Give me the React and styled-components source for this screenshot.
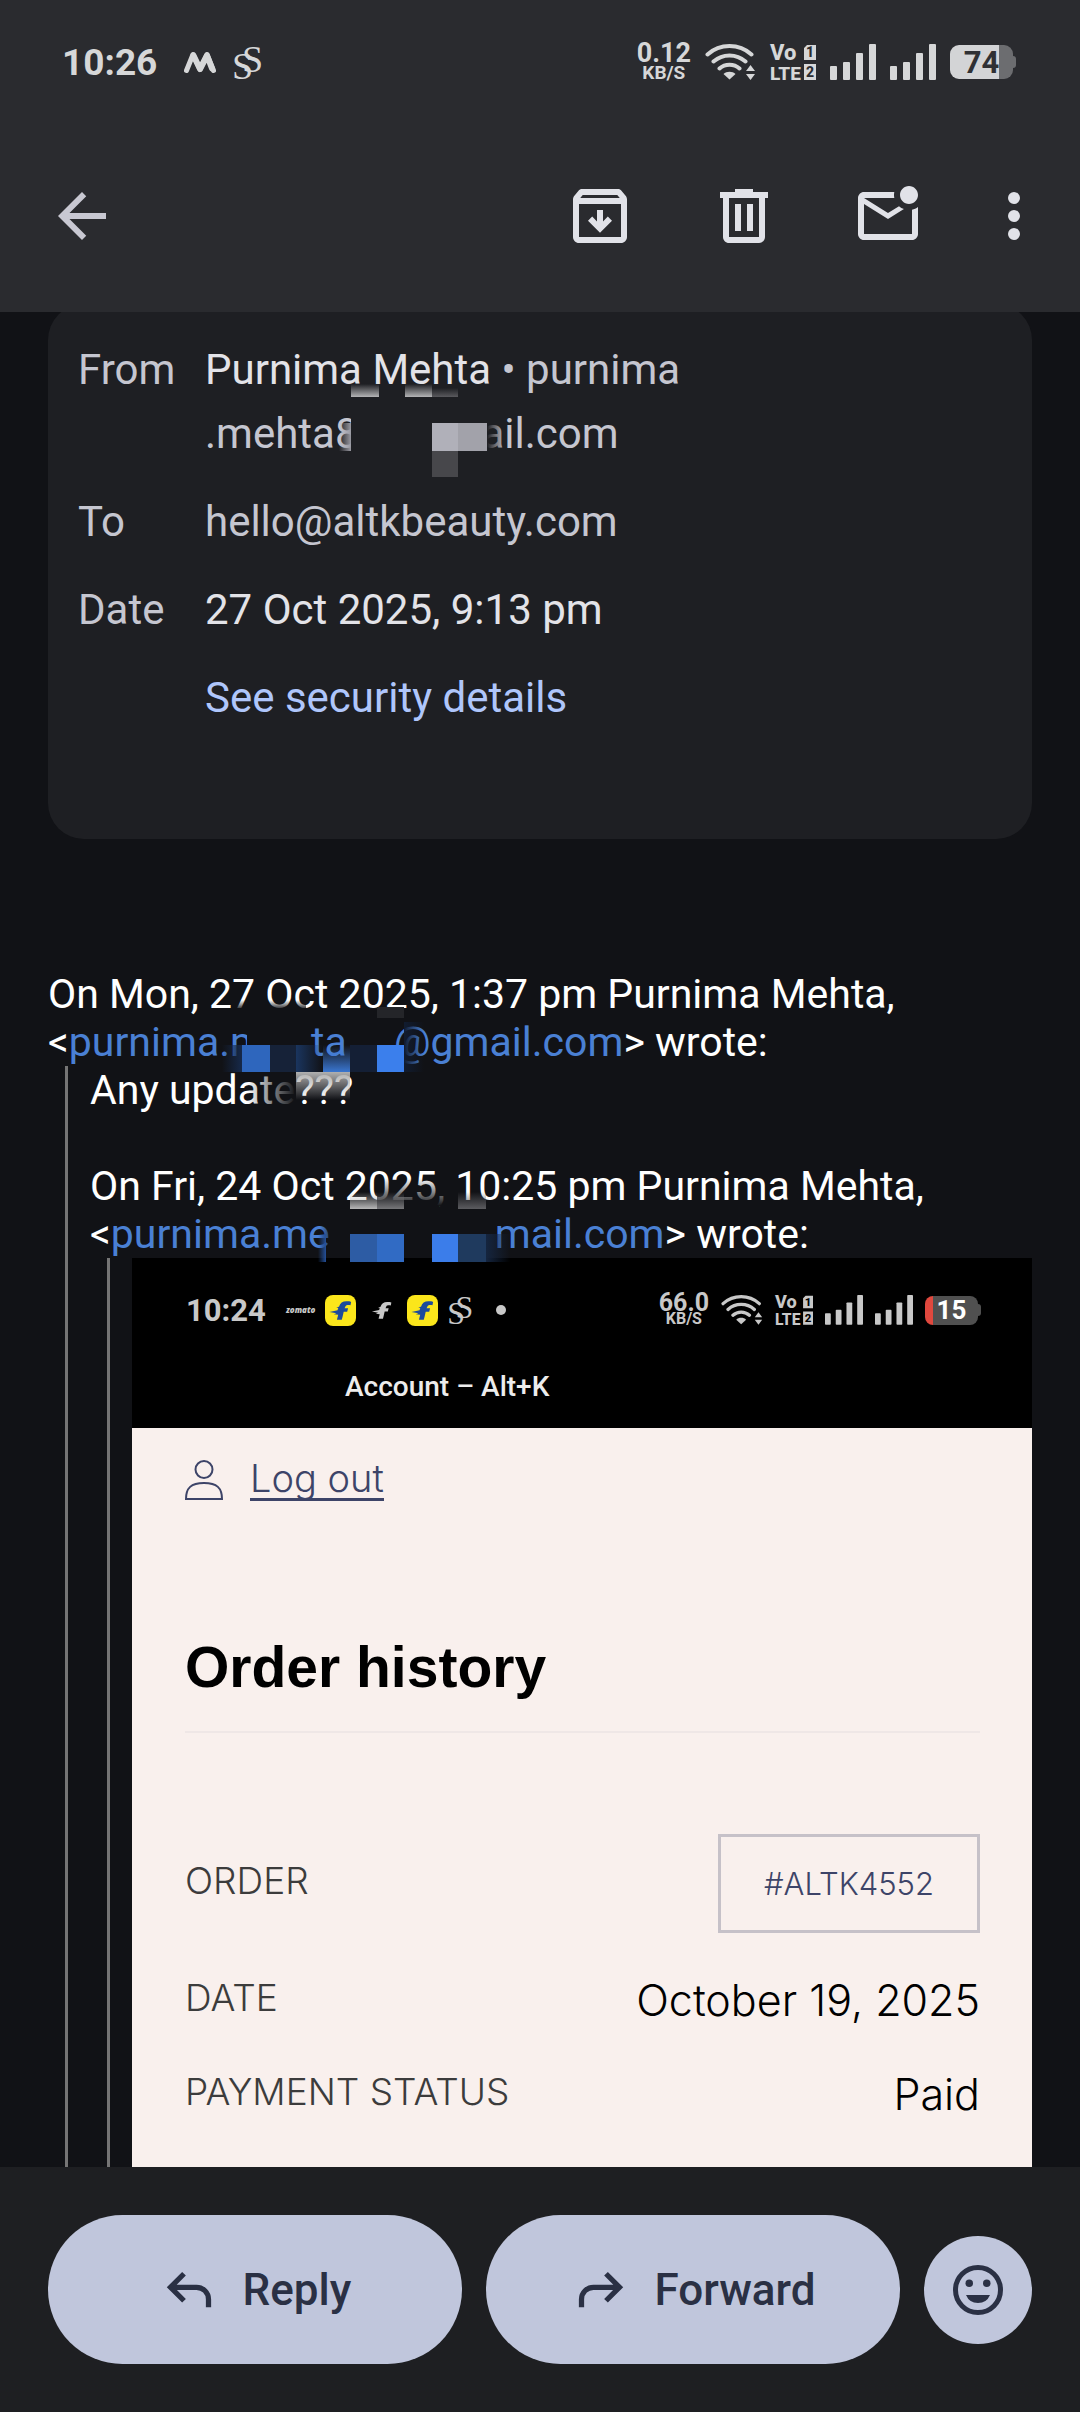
import React from "react"
import styled, { createGlobalStyle } from "styled-components"

const GlobalStyle = createGlobalStyle`
    *{
      box-sizing:border-box;
    }
    body{
      margin:0;
      background-color:#111216;
      font-family:Roboto, sans-serif;
    }
    button{
      border:none;
      padding:0;
      background:none;
      color:inherit;
      font:inherit;
      cursor:pointer;
    }
    a{
      color:inherit;
      text-decoration:none;
    }
    svg{
      display:block;
      flex:none;
    }
`

const StyledPage = styled.div`
    display:flex;
    flex-direction:column;
    height:100vh;
    overflow:hidden;
`

const StyledHeader = styled.header`
    flex:none;
    background-color:#2a2b2f;
`

/* ---------- status bar ---------- */

const StyledStatusBar = styled.div`
    display:flex;
    align-items:center;
    justify-content:space-between;
    height:${({ $small }) => $small ? "104px" : "124px"};
    padding:${({ $small }) => $small ? "0 54px" : "0 67px 0 62px"};
    color:${({ $small }) => $small ? "#c8c8c8" : "#d6d7d8"};
`

const StyledStatusSide = styled.div`
    display:flex;
    align-items:center;
    gap:${({ $gap }) => $gap}px;
`

const StyledTime = styled.span`
    font-size:${({ $small }) => $small ? 31 : 37}px;
    font-weight:700;
    line-height:1;
    margin-right:10px;
`

const StyledStack = styled.span`
    display:flex;
    flex-direction:column;
    align-items:center;
    font-weight:700;
`

const StyledRate = styled.span`
    font-size:${({ $small }) => $small ? 25 : 27}px;
    line-height:${({ $small }) => $small ? 18 : 21}px;
`

const StyledUnit = styled.span`
    font-size:${({ $small }) => $small ? 16 : 19}px;
    line-height:${({ $small }) => $small ? 14 : 17}px;
`

const StyledBattery = styled.span`
    position:relative;
    display:flex;
    align-items:center;
    justify-content:center;
    width:${({ $small }) => $small ? 53 : 63}px;
    height:${({ $small }) => $small ? 29 : 34}px;
    border-radius:${({ $small }) => $small ? 8 : 9}px;
    background:${({ $fill, $rest, $level }) => `linear-gradient(90deg, ${$fill} ${$level}%, ${$rest} ${$level}%)`};
    color:${({ $small }) => $small ? "#ffffff" : "#2f3034"};
    font-size:${({ $small }) => $small ? 26 : 31}px;
    font-weight:700;
    line-height:1;
    &::after{
      content:"";
      position:absolute;
      left:100%;
      top:calc(50% - 6px);
      width:3px;
      height:12px;
      border-radius:0 4px 4px 0;
      background-color:${({ $rest }) => $rest};
    }
`

const StyledZomato = styled.span`
    font-family:"Open Sans", sans-serif;
    font-size:8px;
    font-weight:800;
    font-style:italic;
    line-height:1;
`

const StyledDot = styled.span`
    width:10px;
    height:10px;
    margin-left:12px;
    border-radius:50%;
    background-color:currentColor;
`

/* ---------- toolbar ---------- */

const StyledToolbar = styled.div`
    display:flex;
    align-items:center;
    height:188px;
    padding:0 12px 4px 28px;
    color:#e1e2e8;
`

const StyledToolButton = styled.button`
    display:flex;
    align-items:center;
    justify-content:center;
    width:${({ $narrow }) => $narrow ? 108 : 144}px;
    height:144px;
`

const StyledSpacer = styled.div`
    flex:1;
`

/* ---------- message ---------- */

const StyledMain = styled.main`
    flex:1;
    min-height:0;
    overflow:hidden;
    padding:0 48px;
`

// scrolled a little way under the header
const StyledCard = styled.dl`
    display:grid;
    grid-template-columns:127px 1fr;
    row-gap:24px;
    margin:-8px 0 0;
    padding:34px 30px 109px;
    border-radius:36px;
    background-color:#1e1f23;
    font-size:42px;
    line-height:64px;
`

const StyledLabel = styled.dt`
    color:#c5c6d0;
`

const StyledValue = styled.dd`
    grid-column:2;
    margin:0;
    color:${({ $bright }) => $bright ? "#e3e3e8" : "#c5c6d0"};
    b{
      font-weight:400;
      color:#e3e3e8;
    }
    a{
      color:#afc6fb;
    }
`

const StyledMessage = styled.div`
    margin-top:131px;
    color:#ffffff;
    font-size:41px;
    line-height:48px;
    p{
      margin:0;
    }
    p a{
      color:#4a80d4;
    }
`

const StyledQuote = styled.blockquote`
    margin:0 0 0 17px;
    padding-left:22px;
    border-left:3px solid #757575;
`

const StyledGap = styled.span`
    position:relative;
    display:inline-block;
    width:${({ $width }) => $width}px;
    height:20px;
    vertical-align:baseline;
    svg{
      position:absolute;
      left:-100px;
      bottom:-50px;
      pointer-events:none;
    }
`

/* ---------- attached screenshot ---------- */

const StyledShot = styled.div`
    min-height:1100px;
    background-color:#f9f0ed;
    color:#111111;
`

const StyledShotTop = styled.div`
    height:170px;
    background-color:#000000;
`

const StyledShotTitle = styled.div`
    padding-left:213px;
    color:#ececec;
    font-size:28px;
    font-weight:500;
    line-height:50px;
`

const StyledShotBody = styled.div`
    padding:30px 52px 0 53px;
    font-family:Inter, sans-serif;
    font-weight:300;
`

const StyledLogout = styled.a`
    display:flex;
    align-items:center;
    gap:27px;
    color:#3d4468;
    font-size:38px;
    line-height:40px;
    span{
      border-bottom:3px solid currentColor;
    }
`

const StyledHeading = styled.h2`
    margin:130px 0 0;
    padding-bottom:28px;
    border-bottom:2px solid #efe7e6;
    color:#000000;
    font-family:"Liberation Sans", sans-serif;
    font-size:57px;
    font-weight:700;
    line-height:72px;
`

const StyledTable = styled.table`
    width:100%;
    margin-top:80px;
    border-collapse:collapse;
    tr{
      height:94px;
    }
    tr:first-child{
      height:140px;
    }
    th, td{
      padding:0;
      font-weight:300;
    }
    th{
      padding-bottom:4px;
      text-align:left;
      color:#3c3c3c;
      font-size:37px;
    }
    td{
      text-align:right;
      color:#000000;
      font-size:43px;
    }
`

const StyledOrderLink = styled.a`
    display:inline-block;
    padding:0 43px;
    border:3px solid #c6c1c8;
    color:#3d4468;
    font-size:31px;
    line-height:93px;
    vertical-align:middle;
`

/* ---------- reply bar ---------- */

const StyledFooter = styled.footer`
    flex:none;
    display:flex;
    align-items:center;
    gap:24px;
    padding:48px;
    background-color:#1e1f22;
    color:#2a3044;
`

const StyledPill = styled.button`
    && {
      flex:1;
      display:flex;
      align-items:center;
      justify-content:center;
      gap:24px;
      height:149px;
      border-radius:75px;
      background-color:#c0c6dc;
      font-size:44px;
      font-weight:500;
    }
`

const StyledRound = styled.button`
    && {
      display:flex;
      align-items:center;
      justify-content:center;
      width:108px;
      height:108px;
      border-radius:50%;
      background-color:#c0c6dc;
    }
`

/* ---------- icons ---------- */

const Icon = ({ d, color = "currentColor" }) => (
    <svg width="72" height="72" viewBox="0 0 24 24" fill={color} fillRule="evenodd" aria-hidden="true">
        <path d={d} />
    </svg>
)

const paths = {
    back: "M20 11H7.83l5.59-5.59L12 4l-8 8 8 8 1.41-1.41L7.83 13H20z",
    archive: "M20.54 5.23l-1.39-1.68C18.88 3.21 18.47 3 18 3H6c-.47 0-.88.21-1.16.55L3.46 5.23C3.17 5.57 3 6.02 3 6.5V19c0 1.1.9 2 2 2h14c1.1 0 2-.9 2-2V6.5c0-.48-.17-.93-.46-1.27zM6.24 5h11.52l.83 1H5.42l.82-1zM5 19V8h14v11H5zM16 13.6l-4 4-4-4 1.4-1.4 1.6 1.6V10h2v3.8l1.6-1.6z",
    trash: "M9 3h6v1h5v2h-1v13c0 1.1-.9 2-2 2H7c-1.1 0-2-.9-2-2V6H4V4h5zM7 6v13h10V6zM9 8h2v9H9zM13 8h2v9h-2z",
    unread: "M22 8.98V18c0 1.1-.9 2-2 2H4c-1.1 0-2-.9-2-2V6c0-1.1.9-2 2-2h10.1c-.06.32-.1.66-.1 1s.04.68.1 1H4l8 5 3.67-2.29c.47.43 1.02.76 1.63.98L12 13 4 8v10h16V9.9c.74-.15 1.42-.48 2-.92zM16 5c0 1.66 1.34 3 3 3s3-1.34 3-3-1.34-3-3-3-3 1.34-3 3z",
    more: "M12 4a2 2 0 1 0 0 4 2 2 0 0 0 0-4zM12 10a2 2 0 1 0 0 4 2 2 0 0 0 0-4zM12 16a2 2 0 1 0 0 4 2 2 0 0 0 0-4z",
    flip: "M1 13.4l8-1.6.8-2.2-2-.2 2.8-1.4C11.6 4.6 14 2.8 18 2.8c2 0 3.4.1 4.6.6l-.6 3.4c-2-.6-4.4-.4-5 .9l-.9 2h3.5l-.9 3.6h-3.5c-.6 3-1.3 5.5-1.9 8H8.4l1.3-5-4.4-.6 2.6-.9z",
}

const ReplyArrow = ({ flip }) => (
    <svg width="60" height="60" viewBox="0 0 24 24" fill="none" stroke="currentColor" strokeWidth="2.1" aria-hidden="true">
        <g transform={flip ? "translate(24 0) scale(-1 1)" : undefined}>
            <path d="M10 5.5 4.6 10.9 10 16.3M4.6 10.9H15a4.8 4.8 0 0 1 4.8 4.8v3.2" />
        </g>
    </svg>
)

const Smile = () => (
    <svg width="60" height="60" viewBox="0 0 24 24" fill="currentColor" aria-hidden="true">
        <circle cx="12" cy="12" r="9" fill="none" stroke="currentColor" strokeWidth="2" />
        <circle cx="8.5" cy="9.3" r="1.5" />
        <circle cx="15.5" cy="9.3" r="1.5" />
        <path d="M7.2 14h9.6a5.2 5.2 0 0 1-9.6 0z" />
    </svg>
)

const Wifi = ({ width }) => (
    <svg width={width} viewBox="0 0 51 36" fill="none" stroke="currentColor" strokeWidth="4" strokeLinecap="round" aria-hidden="true">
        <path d="M2.5 10.500a33 33 0 0 1 44 0M8.5 17.500a24 24 0 0 1 32 0M14.5 24.500a15 15 0 0 1 20 0" />
        <path d="M24.5 35.5l-6-5.500c3-3 9-3 12 0z" fill="currentColor" stroke="none" />
        <path d="M41 27l4.5-6 4.5 6zM41 30l4.5 6 4.5-6z" fill="currentColor" stroke="none" />
    </svg>
)

const VoLte = ({ width, cut }) => (
    <svg width={width} viewBox="0 0 46 36" overflow="visible" fill="currentColor" fontFamily="Roboto, sans-serif" fontWeight="800" aria-hidden="true">
        <text x="0" y="16" fontSize="22">Vo</text>
        <text x="0" y="36" fontSize="19">LTE</text>
        <path d="M37 1h9v15H34V4zM34 20h12v16H34z" />
        <g fill={cut} fontSize="14">
            <text x="36" y="13">1</text>
            <text x="36" y="33">2</text>
        </g>
    </svg>
)

const Signal = ({ width }) => (
    <svg width={width} viewBox="0 0 46 36" fill="currentColor" aria-hidden="true">
        <rect x="0" y="22" width="7" height="14" rx="1" />
        <rect x="13" y="18" width="7" height="18" rx="1" />
        <rect x="26" y="9" width="7" height="27" rx="1" />
        <rect x="39" y="0" width="7" height="36" rx="1" />
    </svg>
)

const DoubleS = ({ width }) => (
    <svg width={width} viewBox="0 0 31 33" overflow="visible" fill="currentColor" fontFamily="Liberation Serif, serif" fontSize="38" aria-hidden="true">
        <text x="-1" y="33">S</text>
        <text x="9" y="26">S</text>
    </svg>
)

const Peaks = () => (
    <svg width="32" height="22" viewBox="0 0 32 22" fill="none" stroke="currentColor" strokeLinecap="round" strokeLinejoin="round" aria-hidden="true">
        <path d="M2.5 19.5 9 3.5l7 15 7-15 6.5 16" strokeWidth="5" />
        <path d="M9.5 4.5l6.5 13.5 7-13.500 5 13" strokeWidth="6" />
    </svg>
)

const Flipkart = ({ plain }) => (
    <svg width="31" height="31" viewBox="0 0 31 31" aria-hidden="true">
        {!plain && <rect width="31" height="31" rx="8" fill="#fbe61b" />}
        <g transform={plain ? "translate(5 4.5) scale(.9)" : "translate(3.5 3.5)"} fill={plain ? "currentColor" : "#1d4a9c"}>
            <path d={paths.flip} />
        </g>
    </svg>
)

const Person = () => (
    <svg width="38" height="40" viewBox="0 0 38 40" fill="none" stroke="currentColor" strokeWidth="2" aria-hidden="true">
        <circle cx="19" cy="9.5" r="8.5" />
        <path d="M1 39c0-11 5-16 18-16s18 5 18 16z" />
    </svg>
)

// Blurred out part of an address. The origin is 100px left of the gap,
// the text baseline is at y = 100. Tiles: [x, y, width, height, colour, fade direction]
function Mosaic({ id, tiles, width }) {
    return (
        <StyledGap $width={width}>
            <svg width="400" height="150" viewBox="0 0 400 150" aria-hidden="true">
                {
                    tiles.map(([x, y, w, h, color, fade], i) => (
                        <g key={i}>
                            {fade && (
                                <linearGradient id={`${id}${i}`} x1={fade === "left" ? 1 : 0} y1={fade === "up" ? 1 : 0} x2={fade === "right" ? 1 : 0} y2={fade === "down" ? 1 : 0}>
                                    <stop offset="0" stopColor={color} />
                                    <stop offset="1" stopColor={color} stopOpacity="0" />
                                </linearGradient>
                            )}
                            <rect x={x} y={y} width={w} height={h} fill={fade ? `url(#${id}${i})` : color} />
                        </g>
                    ))
                }
            </svg>
        </StyledGap>
    )
}

const fromTiles = [
    [92, 36, 28, 13, "#b4b4b6", "up"],
    [146, 36, 27, 13, "#b4b4b6", "up"],
    [173, 40, 26, 9, "#5a5a5e", "up"],
    [92, 64, 40, 44, "#1e1f23"],
    [80, 75, 12, 28, "#9a9aa2", "left"],
    [173, 75, 26, 28, "#b0b0b9"],
    [199, 75, 29, 28, "#a2a2aa"],
    [173, 103, 26, 26, "#47474b"],
    [228, 70, 18, 36, "#1e1f23", "right"],
]

const quoteTiles = [
    [81, 60, 62, 29, "#111216"],
    [70, 44, 70, 10, "#111216", "up"],
    [76, 89, 28, 27, "#2e66bd"],
    [56, 89, 20, 27, "#16294a", "left"],
    [104, 89, 26, 27, "#162238"],
]

const quoteEndTiles = [
    [49, 89, 27, 27, "#1a355f", "right"],
    [76, 89, 27, 27, "#3a76d0", "up"],
    [103, 89, 27, 27, "#141f35"],
    [130, 89, 27, 27, "#3b7fec"],
    [157, 66, 20, 50, "#111c30", "right"],
    [130, 51, 27, 11, "#242529"],
    [0, 116, 49, 34, "#111216", "left"],
    [49, 116, 54, 28, "#b0b0b0", "down"],
]

const nestedTiles = [
    [147, 30, 81, 28, "#111216", "up"],
    [120, 44, 27, 17, "#b8b8b8", "up"],
    [147, 44, 27, 17, "#77777a", "up"],
    [228, 44, 28, 17, "#5c5c60", "up"],
    [90, 62, 16, 46, "#111216", "left"],
    [88, 86, 8, 28, "#24509a", "left"],
    [120, 86, 27, 28, "#2d5ca4"],
    [147, 86, 27, 28, "#316bc4"],
    [202, 86, 26, 28, "#3b7dea"],
    [228, 86, 28, 28, "#1f3a5e"],
    [256, 86, 24, 28, "#15253f", "right"],
]

/* ---------- parts ---------- */

function StatusBar({ small, time, rate, battery, children }) {
    const cut = small ? "#000000" : "#2a2b2f"
    return (
        <StyledStatusBar $small={small}>
            <StyledStatusSide $gap={small ? 10 : 17}>
                <StyledTime $small={small}>{time}</StyledTime>
                {children}
            </StyledStatusSide>
            <StyledStatusSide $gap={small ? 12 : 14}>
                <StyledStack>
                    <StyledRate $small={small}>{rate}</StyledRate>
                    <StyledUnit $small={small}>KB/S</StyledUnit>
                </StyledStack>
                <Wifi width={small ? 42 : 51} />
                <VoLte width={small ? 38 : 46} cut={cut} />
                <Signal width={small ? 38 : 46} />
                <Signal width={small ? 38 : 46} />
                <StyledBattery
                    $small={small}
                    $fill={small ? "#e0483e" : "#d3d4d6"}
                    $rest={small ? "#505050" : "#6c6d70"}
                    $level={small ? 16 : 78}
                >
                    {battery}
                </StyledBattery>
            </StyledStatusSide>
        </StyledStatusBar>
    )
}

function Attachment() {
    return (
        <StyledShot>
            <StyledShotTop>
                <StatusBar small time="10:24" rate="66.0" battery="15">
                    <StyledZomato>zomato</StyledZomato>
                    <Flipkart />
                    <Flipkart plain />
                    <Flipkart />
                    <DoubleS width={26} />
                    <StyledDot />
                </StatusBar>
                <StyledShotTitle>Account – Alt+K</StyledShotTitle>
            </StyledShotTop>
            <StyledShotBody>
                <StyledLogout href="#logout">
                    <Person />
                    <span>Log out</span>
                </StyledLogout>
                <StyledHeading>Order history</StyledHeading>
                <StyledTable>
                    <tbody>
                        <tr>
                            <th scope="row">ORDER</th>
                            <td><StyledOrderLink href="#order">#ALTK4552</StyledOrderLink></td>
                        </tr>
                        <tr>
                            <th scope="row">DATE</th>
                            <td>October 19, 2025</td>
                        </tr>
                        <tr>
                            <th scope="row">PAYMENT STATUS</th>
                            <td>Paid</td>
                        </tr>
                    </tbody>
                </StyledTable>
            </StyledShotBody>
        </StyledShot>
    )
}

function App() {
    return (
        <StyledPage>
            <GlobalStyle />
            <StyledHeader>
                <StatusBar time="10:26" rate="0.12" battery="74">
                    <Peaks />
                    <DoubleS width={31} />
                </StatusBar>
                <StyledToolbar>
                    <StyledToolButton $narrow aria-label="Back"><Icon d={paths.back} color="#c8c8d2" /></StyledToolButton>
                    <StyledSpacer />
                    <StyledToolButton aria-label="Archive"><Icon d={paths.archive} /></StyledToolButton>
                    <StyledToolButton aria-label="Delete"><Icon d={paths.trash} /></StyledToolButton>
                    <StyledToolButton aria-label="Mark unread"><Icon d={paths.unread} /></StyledToolButton>
                    <StyledToolButton $narrow aria-label="More"><Icon d={paths.more} /></StyledToolButton>
                </StyledToolbar>
            </StyledHeader>
            <StyledMain>
                <StyledCard>
                    <StyledLabel>From</StyledLabel>
                    <StyledValue>
                        <b>Purnima Mehta</b> • purnima<br />
                        .mehta8<Mosaic id="from" width={123} tiles={fromTiles} />ail.com
                    </StyledValue>
                    <StyledLabel>To</StyledLabel>
                    <StyledValue>hello@altkbeauty.com</StyledValue>
                    <StyledLabel>Date</StyledLabel>
                    <StyledValue $bright>27 Oct 2025, 9:13 pm</StyledValue>
                    <StyledValue><a href="#security">See security details</a></StyledValue>
                </StyledCard>
                <StyledMessage>
                    <p>
                        On Mon, 27 Oct 2025, 1:37 pm Purnima Mehta,<br />
                        &lt;<a href="#mail">purnima.m<Mosaic id="quote" width={45} tiles={quoteTiles} />ta<Mosaic id="end" width={47} tiles={quoteEndTiles} />@gmail.com</a>&gt; wrote:
                    </p>
                    <StyledQuote>
                        <p>Any update???</p>
                        <br />
                        <p>
                            On Fri, 24 Oct 2025, 10:25 pm Purnima Mehta,<br />
                            &lt;<a href="#mail">purnima.me<Mosaic id="nested" width={165} tiles={nestedTiles} />mail.com</a>&gt; wrote:
                        </p>
                        <StyledQuote>
                            <Attachment />
                        </StyledQuote>
                    </StyledQuote>
                </StyledMessage>
            </StyledMain>
            <StyledFooter>
                <StyledPill><ReplyArrow />Reply</StyledPill>
                <StyledPill><ReplyArrow flip />Forward</StyledPill>
                <StyledRound aria-label="Add reaction"><Smile /></StyledRound>
            </StyledFooter>
        </StyledPage>
    )
}

export default App;
